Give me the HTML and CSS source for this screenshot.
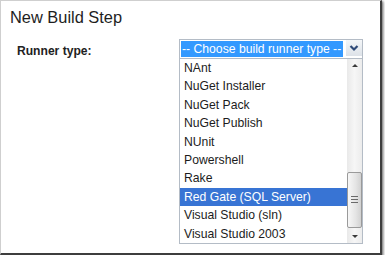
FILE: index.html
```html
<!DOCTYPE html>
<html>
<head>
<meta charset="utf-8">
<link rel="stylesheet" href="styles.css">
</head>
<body>
<div class="frame">
  <h1 class="title">New Build Step</h1>
  <div class="row">
    <div class="label">Runner type:</div>
    <div class="combo">
      <div class="combo-head">
        <span class="combo-value">-- Choose build runner type --</span>
        <span class="combo-btn">
          <svg width="16" height="16" viewBox="0 0 16 16"><path d="M4.5 6 L8 9.5 L11.5 6" fill="none" stroke="#2f4a78" stroke-width="2.2"/></svg>
        </span>
      </div>
      <div class="combo-list">
        <ul class="items">
          <li class="item">NAnt</li>
          <li class="item">NuGet Installer</li>
          <li class="item">NuGet Pack</li>
          <li class="item">NuGet Publish</li>
          <li class="item">NUnit</li>
          <li class="item">Powershell</li>
          <li class="item">Rake</li>
          <li class="item selected">Red Gate (SQL Server)</li>
          <li class="item">Visual Studio (sln)</li>
          <li class="item">Visual Studio 2003</li>
        </ul>
        <div class="scroll">
          <div class="sbtn"><span class="tri up"></span></div>
          <div class="track">
            <div class="thumb"><span class="grip"></span></div>
          </div>
          <div class="sbtn"><span class="tri down"></span></div>
        </div>
      </div>
    </div>
  </div>
</div>
</body>
</html>
```
FILE: styles.css
```css
html, body {
  margin: 0;
  padding: 0;
  background: #ffffff;
}
body {
  font-family: "Liberation Sans", Arial, sans-serif;
  color: #222;
}
.frame {
  box-sizing: border-box;
  width: 382px;
  height: 255px;
  border-left: 1px solid #cfcfcf;
  border-top: 1px solid #cfcfcf;
  border-right: 2px solid #3e3e3e;
  border-bottom: 2px solid #3e3e3e;
  box-shadow: 1px 1px 2px rgba(0,0,0,0.45), 2px 2px 3px rgba(0,0,0,0.2);
  padding-top: 6px;
  background: #fff;
}
.title {
  margin: 0;
  padding-left: 9px;
  font-size: 16.4px;
  line-height: 20px;
  font-weight: normal;
  color: #1e1e1e;
}
.row {
  display: flex;
  margin-top: 12px;
  padding-left: 16px;
}
.label {
  width: 162px;
  font-size: 12.1px;
  font-weight: bold;
  line-height: 18px;
  margin-top: 3px;
  color: #222;
}
.combo {
  width: 184px;
  display: flex;
  flex-direction: column;
}
.combo-head {
  display: flex;
  align-items: flex-start;
  border: 1px solid #b4bcc6;
  border-bottom: none;
  padding: 1px 0 0 1px;
  height: 17px;
}
.combo-value {
  width: 162px;
  height: 16px;
  background: #3399ff;
  color: #fff;
  font-size: 12.2px;
  line-height: 16px;
  padding-left: 1px;
  box-sizing: border-box;
  white-space: nowrap;
  overflow: hidden;
}
.combo-btn {
  margin-left: 3px;
  margin-top: -1px;
  width: 16px;
  height: 16px;
  background: linear-gradient(#f4f6f8, #dde2e8);
  display: flex;
}
.combo-list {
  display: flex;
  border: 1px solid #b4bcc6;
  height: 184px;
}
.items {
  list-style: none;
  margin: 0;
  padding: 0;
  width: 167px;
}
.item {
  height: 18.4px;
  line-height: 18.4px;
  padding-left: 4px;
  font-size: 12.2px;
  color: #1c1c1c;
  white-space: nowrap;
}
.item.selected {
  background: #3874d4;
  color: #fff;
}
.scroll {
  width: 15px;
  display: flex;
  flex-direction: column;
  background: linear-gradient(to right, #e9e9e9, #f6f6f6 50%, #ececec);
}
.sbtn {
  height: 16px;
  display: flex;
  align-items: center;
  justify-content: center;
}
.tri {
  width: 0;
  height: 0;
  border-left: 3px solid transparent;
  border-right: 3px solid transparent;
}
.tri.up {
  border-bottom: 3px solid #3a3a3a;
  margin-top: -2px;
}
.tri.down {
  border-top: 3px solid #3a3a3a;
  margin-top: 3px;
}
.track {
  flex: 1;
}
.thumb {
  margin-top: 97px;
  height: 56px;
  box-sizing: border-box;
  border: 1px solid #9a9a9a;
  border-radius: 2px;
  background: linear-gradient(to right, #f7f7f7, #e4e4e4 60%, #d2d2d2);
  display: flex;
  align-items: center;
  justify-content: center;
}
.grip {
  width: 7px;
  height: 7px;
  background: repeating-linear-gradient(#6a6a6a 0 1px, transparent 1px 3px);
}
```
